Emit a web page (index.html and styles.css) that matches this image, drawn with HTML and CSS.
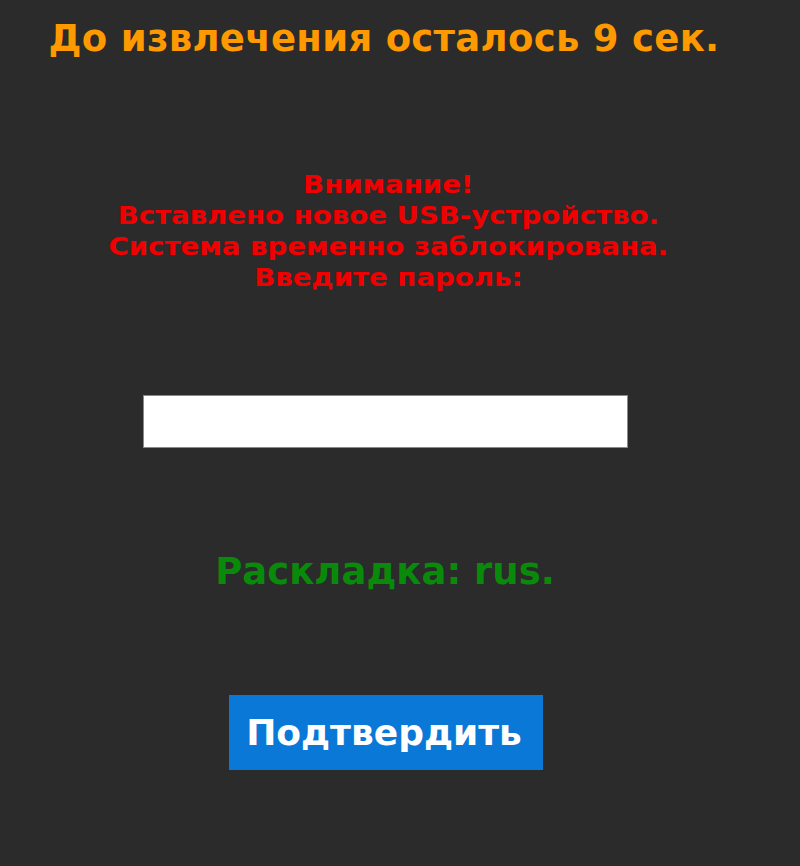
FILE: index.html
```html
<!DOCTYPE html>
<html lang="ru">
<head>
<meta charset="utf-8">
<title>Блокировка</title>
<link rel="stylesheet" href="styles.css">
</head>
<body>
<main class="screen">
  <h1 class="timer">До извлечения осталось 9 сек.</h1>
  <p class="warning"><span class="warning-text">Внимание!<br>Вставлено новое USB-устройство.<br>Система временно заблокирована.<br>Введите пароль:</span></p>
  <input class="password" type="password" aria-label="Пароль">
  <p class="layout">Раскладка: rus.</p>
  <button class="confirm" type="button">Подтвердить</button>
</main>
</body>
</html>
```

FILE: styles.css
```css
html, body {
  margin: 0;
  padding: 0;
  background: #2b2b2b;
}
.screen {
  width: 772px;
  height: 866px;
  display: flex;
  flex-direction: column;
  align-items: center;
  box-sizing: border-box;
  padding-top: 16px;
  overflow: hidden;
}
.timer {
  margin: 0 0 0 -4px;
  font-family: "DejaVu Sans", sans-serif;
  font-weight: bold;
  font-size: 37px;
  letter-spacing: 0.3px;
  line-height: 46px;
  color: #ff9900;
}
.warning {
  margin: 108px 0 0 4px;
  font-family: "DejaVu Sans", sans-serif;
  font-weight: bold;
  font-size: 24px;
  line-height: 31px;
  color: #f00000;
  text-align: center;
}
.warning-text {
  display: inline-block;
  transform: scaleX(1.15);
}
.password {
  margin: 101px 0 0 -1px;
  width: 485px;
  height: 53px;
  box-sizing: border-box;
  border: 1px solid #8a8a8a;
  background: #fff;
  padding: 0;
}
.layout {
  margin: 102px 0 0 -2px;
  font-family: "DejaVu Sans", sans-serif;
  font-weight: bold;
  font-size: 37px;
  line-height: 44px;
  color: #0a8a0a;
}
.confirm {
  margin: 101px 0 0 0;
  width: 314px;
  height: 75px;
  border: none;
  background: #0a78d7;
  color: #fff;
  font-family: "DejaVu Sans", sans-serif;
  font-weight: bold;
  font-size: 36px;
  padding: 0 4px 0 0;
}
```
